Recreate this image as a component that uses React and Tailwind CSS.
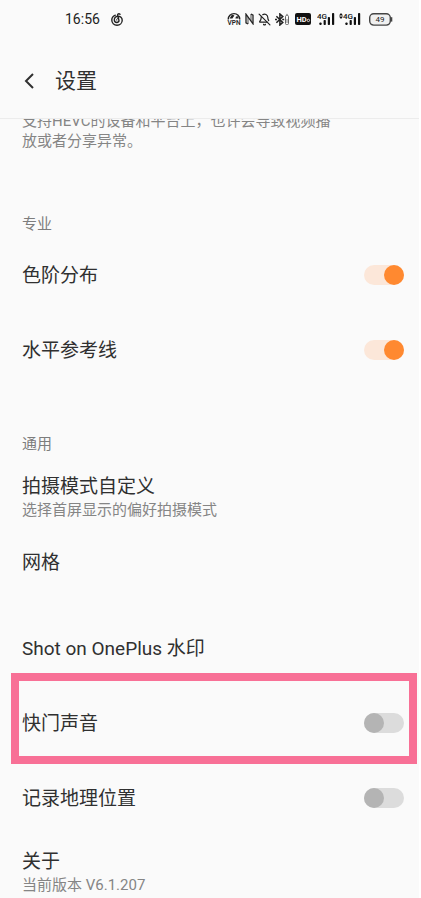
import { useState } from "react";
import { BellOff } from "lucide-react";

function MusicIcon() {
  return (
    <svg width="12" height="13" viewBox="0 0 24 26" fill="none" stroke="#222" strokeWidth="2.8" strokeLinecap="round">
      <path d="M8.6 4.4C4.4 6 1.6 9.8 1.6 14.2C1.6 20 6.2 24.4 12 24.4C17.8 24.4 22.4 20 22.4 14.4C22.4 9.6 18.6 6.6 14 6.6C9.8 6.6 6.6 9.6 6.6 13.6C6.6 16.8 8.8 19 11.6 19C14.4 19 16.4 17 15.8 14.2L13.4 4.6C12.8 1.8 16 .8 18 2.6" />
      <path d="M14.2 10.6C12 10.8 10.8 12.6 11.4 14.4" strokeWidth="2" />
    </svg>
  );
}

function VpnIcon() {
  return (
    <svg width="14" height="14" viewBox="0 0 14 14" fill="none">
      <path d="M1.2 7.4A5.8 5.8 0 0 1 12.8 7.4" stroke="#222" strokeWidth="1.4" />
      <path
        d="M2.6 6.6L5 2.6L7.4 3.4L5.4 6.6zM8.4 6.6L9 4.4L11.2 4.2L11.6 6.6z"
        fill="#222"
      />
      <text x="7" y="13.4" fontSize="6.5" fontWeight="600" fill="#222" textAnchor="middle">
        VPN
      </text>
    </svg>
  );
}

function NfcIcon() {
  return (
    <svg width="9" height="12" viewBox="0 0 9 12" fill="none" stroke="#222" strokeWidth="1.3">
      <path d="M3 11L1 9.8V1.2L8 10.8V2.2L6 1" />
      <path d="M3 4v7M6 1v7" strokeWidth="0.8" />
    </svg>
  );
}

function BluetoothIcon() {
  return (
    <svg width="14" height="13" viewBox="0 0 14 13" fill="none" stroke="#222">
      <path d="M1.4 3.2L7.8 9.4L4.9 12V1L7.8 3.6L1.4 9.8" strokeWidth="1.5" />
      <path d="M0 6.5h2M7.2 6.5h2" strokeWidth="1.6" />
      <rect x="10.5" y="2.5" width="3" height="9" rx="1" stroke="#666" />
      <path d="M11.2 1.4h1.6M12 6v4" stroke="#888" />
    </svg>
  );
}

function HdIcon() {
  return (
    <svg width="16" height="12" viewBox="0 0 16 12">
      <rect width="16" height="12" rx="2" fill="#111" />
      <text x="1.4" y="8.8" fontSize="7.5" fontWeight="700" fill="#fff">
        HD
      </text>
      <circle cx="13.4" cy="7.4" r="1.2" fill="none" stroke="#fff" strokeWidth="0.8" />
    </svg>
  );
}

function Signal() {
  return (
    <svg width="18" height="14" viewBox="0 0 18 14" fill="#111">
      <text x="0" y="6.6" fontSize="8" fontWeight="500">
        4G
      </text>
      <rect x="2.4" y="10.5" width="2.2" height="2.5" rx="0.8" />
      <rect x="6.6" y="8" width="2.2" height="5" rx="0.8" />
      <rect x="10.8" y="5" width="2.2" height="8" rx="0.8" />
      <rect x="15" y="1" width="2.2" height="12" rx="0.8" />
    </svg>
  );
}

function DataArrows() {
  return (
    <svg width="4" height="14" viewBox="0 0 4 14" fill="#111">
      <path d="M2 1L4 3.4H0zM2 7L4 4.6H0z" />
    </svg>
  );
}

function Battery() {
  return (
    <svg width="24" height="13" viewBox="0 0 24 13">
      <rect x="0.7" y="0.7" width="20.6" height="11.4" rx="4" fill="#f0f0f0" stroke="#444" strokeWidth="1.4" />
      <path d="M22.4 4.2v4.4" stroke="#444" strokeWidth="1.8" />
      <text x="11" y="9.4" fontSize="8" fill="#222" textAnchor="middle">
        49
      </text>
    </svg>
  );
}

function StatusBar() {
  return (
    <div className="flex h-[38px] items-center justify-between pr-[26px] pl-[65px] text-[#222]">
      <div className="flex items-center gap-[11px]">
        <span className="text-sm">16:56</span>
        <MusicIcon />
      </div>
      <div className="flex items-center">
        <VpnIcon />
        <span className="ml-1">
          <NfcIcon />
        </span>
        <BellOff size={13} strokeWidth={2.2} className="ml-1" />
        <span className="ml-1">
          <BluetoothIcon />
        </span>
        <span className="ml-1.5">
          <HdIcon />
        </span>
        <span className="ml-1.5">
          <Signal />
        </span>
        <span className="ml-1 flex">
          <DataArrows />
          <Signal />
        </span>
        <span className="ml-2">
          <Battery />
        </span>
      </div>
    </div>
  );
}

function SectionTitle({ children }) {
  return <h2 className="text-[15px] leading-[22px] text-[#7d7d7d]">{children}</h2>;
}

function SwitchRow({ label, defaultChecked = false, highlighted = false }) {
  const [checked, setChecked] = useState(defaultChecked);

  return (
    <label className="relative flex h-[75px] items-center justify-between text-[19px] leading-6">
      <span className="pt-0.5">{label}</span>
      <input
        type="checkbox"
        role="switch"
        checked={checked}
        onChange={(e) => setChecked(e.target.checked)}
        className="h-5 w-10 appearance-none rounded-full bg-[#dcdcdc] before:block before:size-5 before:rounded-full before:bg-[#b4b4b4] checked:bg-[#fce7d9] checked:before:translate-x-5 checked:before:bg-[#ff8930]"
      />
      {highlighted && (
        <span className="pointer-events-none absolute -top-3 -right-[13px] -bottom-1 -left-[11px] border-8 border-[#f87096]" />
      )}
    </label>
  );
}

function LinkRow({ label, description, className }) {
  return (
    <button type="button" className={`block w-full text-left ${className}`}>
      <span className="block text-[19px] leading-[26px]">{label}</span>
      {description && (
        <span className="block text-[15px] leading-5 text-[#858585]">
          {description}
        </span>
      )}
    </button>
  );
}

export default function App() {
  return (
    <div className="min-h-screen bg-white pr-0.5 font-['Roboto','Noto_Sans_CJK_SC',sans-serif] text-[#303030]">
      <div className="min-h-screen bg-[#fafafa]">
        <header className="sticky top-0 z-10 border-b border-[#ececec] bg-[#fafafa]">
          <StatusBar />
          <div className="flex h-20 items-center gap-5 pt-1.5 pl-6">
            <button type="button" aria-label="返回">
              <svg width="11" height="18" viewBox="0 0 11 18" fill="none" stroke="#303030" strokeWidth="2">
                <path d="M9 2L2 9L9 16" />
              </svg>
            </button>
            <h1 className="text-[21px] leading-7">设置</h1>
          </div>
        </header>

        <main className="pr-[15px] pl-[22px]">
          <p className="-mt-2 w-[314px] text-[15px] leading-5 text-[#858585]">
            支持HEVC的设备和平台上，也许会导致视频播放或者分享异常。
          </p>

          <section className="mt-[62px]">
            <SectionTitle>专业</SectionTitle>
            <div className="pt-0.5">
              <SwitchRow label="色阶分布" defaultChecked />
              <SwitchRow label="水平参考线" defaultChecked />
            </div>
          </section>

          <section className="mt-[46px]">
            <SectionTitle>通用</SectionTitle>
            <LinkRow
              label="拍摄模式自定义"
              description="选择首屏显示的偏好拍摄模式"
              className="mt-[19px]"
            />
            <LinkRow label="网格" className="mt-[30px]" />
            <LinkRow label="Shot on OnePlus 水印" className="mt-[60px] mb-[23px]" />
            <SwitchRow label="快门声音" highlighted />
            <SwitchRow label="记录地理位置" />
            <LinkRow label="关于" description="当前版本 V6.1.207" className="mt-3.5" />
          </section>
        </main>
      </div>
    </div>
  );
}
